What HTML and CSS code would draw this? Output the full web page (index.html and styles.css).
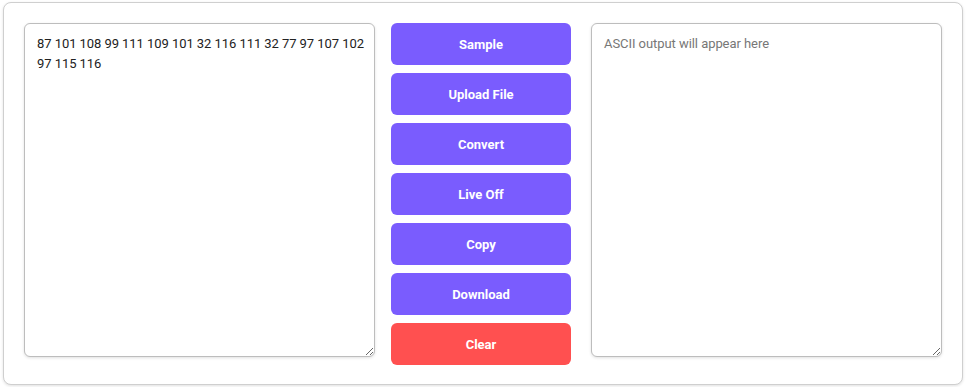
FILE: index.html
```html
<!DOCTYPE html>
<html>
<head>
<meta charset="utf-8">
<link rel="stylesheet" href="styles.css">
</head>
<body>
<div class="card">
  <textarea class="pane">87 101 108 99 111 109 101 32 116 111 32 77 97 107 102 97 115 116</textarea>
  <div class="actions">
    <button class="btn">Sample</button>
    <button class="btn">Upload File</button>
    <button class="btn">Convert</button>
    <button class="btn">Live Off</button>
    <button class="btn">Copy</button>
    <button class="btn">Download</button>
    <button class="btn btn-danger">Clear</button>
  </div>
  <textarea class="pane output" placeholder="ASCII output will appear here"></textarea>
</div>
</body>
</html>
```

FILE: styles.css
```css
html, body {
  margin: 0;
  padding: 0;
  background: #ffffff;
}
body {
  padding: 2px 3px;
  font-family: Roboto, "Liberation Sans", sans-serif;
}
.card {
  box-sizing: border-box;
  width: 960px;
  height: 383px;
  border: 1px solid #cfcfcf;
  border-radius: 8px;
  box-shadow: 0 1px 3px rgba(0,0,0,0.12);
  padding: 20px;
  display: flex;
  align-items: flex-start;
  background: #fff;
}
.pane {
  box-sizing: border-box;
  width: 351px;
  height: 334px;
  margin: 0;
  border: 1px solid #bdbdbd;
  border-radius: 6px;
  box-shadow: 0 1px 3px rgba(0,0,0,0.12);
  padding: 10px 4px 10px 12px;
  font-family: Roboto, "Liberation Sans", sans-serif;
  font-size: 13px;
  letter-spacing: -0.06px;
  line-height: 19.5px;
  color: #222;
  outline: none;
  resize: both;
}
.pane::placeholder {
  color: #777;
}
.actions {
  width: 180px;
  margin: 0 20px 0 16px;
  display: flex;
  flex-direction: column;
  gap: 8px;
}
.btn {
  height: 42px;
  border: none;
  border-radius: 6px;
  background: #7a5cfe;
  color: #fff;
  font-family: Roboto, "Liberation Sans", sans-serif;
  font-weight: 700;
  font-size: 13px;
  padding: 0;
}
.btn-danger {
  background: #ff5050;
}
```
